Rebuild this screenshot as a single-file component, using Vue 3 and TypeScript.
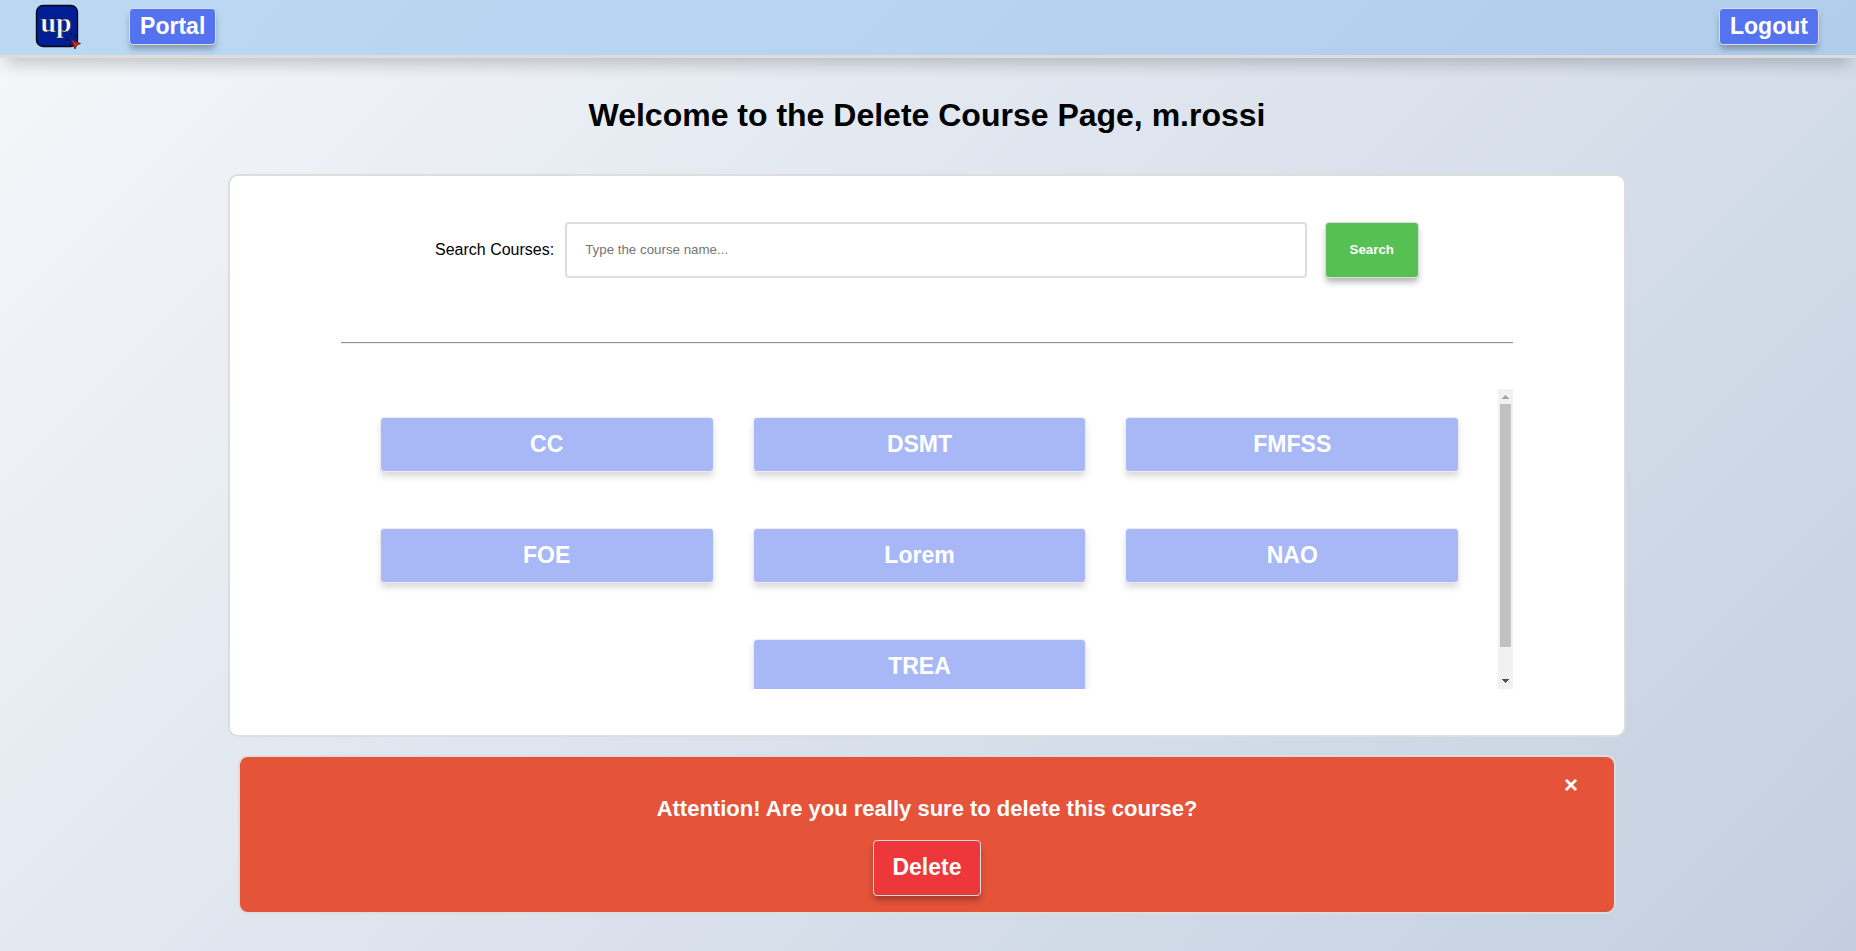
<script setup lang="ts">
import { computed, nextTick, onMounted, ref } from 'vue'

const username = ref('m.rossi')
const query = ref('')
const filter = ref('')
const showAlert = ref(true)
const courses = ref<string[]>(['CC', 'DSMT', 'FMFSS', 'FOE', 'Lorem', 'NAO', 'TREA'])

const list = ref<HTMLElement | null>(null)
const thumbSize = ref(90)
const thumbTop = ref(0)

const visibleCourses = computed(() =>
  courses.value.filter((name) => name.toLowerCase().includes(filter.value.toLowerCase())),
)

const thumbStyle = computed(() => ({ height: `${thumbSize.value}%`, top: `${thumbTop.value}%` }))

function updateThumb(): void {
  const el = list.value
  if (!el) return
  thumbSize.value = (el.clientHeight / el.scrollHeight) * 100
  thumbTop.value = (el.scrollTop / el.scrollHeight) * 100
}

function scrollList(amount: number): void {
  list.value?.scrollBy({ top: amount })
}

async function search(): Promise<void> {
  filter.value = query.value.trim()
  await nextTick()
  updateThumb()
}

onMounted(updateThumb)
</script>

<template>
  <div class="page">
    <header class="navbar">
      <svg class="logo" viewBox="0 0 46 46" role="img" aria-label="up">
        <rect x="1.5" y="1.5" width="41" height="41" rx="6.5" fill="#001f96" stroke="#06070f" stroke-width="1.4" />
        <text x="21" y="27.5" text-anchor="middle" class="logo-text">up</text>
        <g fill="#04082e">
          <circle cx="31" cy="33" r="1" />
          <circle cx="36" cy="30" r="1" />
          <circle cx="40" cy="32" r="1" />
          <circle cx="33" cy="36" r="1" />
          <circle cx="31" cy="40" r="1" />
          <circle cx="35" cy="41" r="1" />
        </g>
        <path d="M36 35.500 L45.500 39.500 L42 41 L40 45 Z" fill="#c52a12" stroke="#4d1712" stroke-width="0.8" />
      </svg>
      <button type="button" class="btn nav-btn">Portal</button>
      <button type="button" class="btn nav-btn logout">Logout</button>
    </header>

    <main>
      <h1>Welcome to the Delete Course Page, {{ username }}</h1>

      <section class="card">
        <form class="search" @submit.prevent="search">
          <label for="course-name">Search Courses:</label>
          <input id="course-name" v-model="query" type="text" placeholder="Type the course name..." />
          <button type="submit" class="btn search-btn">Search</button>
        </form>

        <hr />

        <div class="list-frame">
          <div ref="list" class="course-list" @scroll="updateThumb">
            <button v-for="name in visibleCourses" :key="name" type="button" class="btn course" disabled>
              {{ name }}
            </button>
          </div>
          <div class="scrollbar">
            <button type="button" class="arrow" aria-label="Scroll up" @click="scrollList(-40)">
              <svg viewBox="0 0 15 15"><path d="M4 10h7v-1h-1v-1h-1v-1h-1v-1h-1v1h-1v1h-1v1h-1z" fill="#a3a3a3" /></svg>
            </button>
            <div class="track"><div class="thumb" :style="thumbStyle"></div></div>
            <button type="button" class="arrow" aria-label="Scroll down" @click="scrollList(40)">
              <svg viewBox="0 0 15 15"><path d="M4 5h7v1h-1v1h-1v1h-1v1h-1v-1h-1v-1h-1v-1h-1z" fill="#505050" /></svg>
            </button>
          </div>
        </div>
      </section>

      <section v-if="showAlert" class="alert" role="alert">
        <button type="button" class="close" aria-label="Close" @click="showAlert = false">×</button>
        <p>Attention! Are you really sure to delete this course?</p>
        <button type="button" class="btn delete-btn">Delete</button>
      </section>
    </main>
  </div>
</template>

<style>
body {
  margin: 0;
}
</style>

<style scoped>
.page {
  box-sizing: border-box;
  min-height: 100vh;
  padding-bottom: 36px;
  background: linear-gradient(135deg, #f5f7fa, #c3cfe0);
  color: #000;
  font-family: "Liberation Sans", Arial, Helvetica, sans-serif;
  font-size: 16px;
}

.navbar {
  display: flex;
  align-items: flex-start;
  padding: 4px 2% 5px;
  border-bottom: 3px solid #ddd;
  background: linear-gradient(135deg, #bcd9f3, #b0ceec);
  box-shadow: 0 12px 16px -6px rgba(0, 0, 0, 0.2);
}

.logo {
  width: 46px;
  height: 46px;
  margin: 0 48px 0 -2px;
}

.logo-text {
  font-family: "Liberation Serif", "Times New Roman", serif;
  font-size: 28px;
  font-weight: bold;
  fill: #fff;
  stroke: #222;
  stroke-width: 0.6px;
}

.btn {
  box-sizing: border-box;
  border: 1px solid #ddd;
  border-radius: 4px;
  background: #5473f0;
  box-shadow: 0 5px 6px -1px rgba(0, 0, 0, 0.3);
  color: #fff;
  font-family: inherit;
  font-weight: bold;
  text-align: center;
}

.nav-btn,
.course,
.delete-btn {
  font-size: 23px;
  line-height: 26px;
}

.nav-btn {
  margin-top: 4px;
  padding: 4px 10px 5px;
}

.logout {
  margin-left: auto;
}

main {
  padding-right: 2px;
}

h1 {
  margin: 39px 0 40px;
  font-size: 32px;
  line-height: 37px;
  text-align: center;
}

.card {
  box-sizing: border-box;
  width: 75.4%;
  margin: 0 auto;
  padding: 46px 6%;
  border: 2px solid #ddd;
  border-radius: 10px;
  background: #fff;
}

.search {
  display: flex;
  align-items: center;
  padding: 0 8%;
}

.search input {
  box-sizing: border-box;
  flex: 1;
  min-width: 0;
  height: 56px;
  margin: 0 18px 0 11px;
  padding: 0 18px 2px;
  border: 2px solid #ddd;
  border-radius: 4px;
  background: #fff;
  font-family: inherit;
}

.search input::placeholder {
  color: #757575;
}

.search-btn {
  height: 56px;
  padding: 0 24px 2px;
  background: #57c052;
}

hr {
  margin: 64px 0 45px;
  border: solid;
  border-width: 1px 0;
  border-color: #909090 #eee #eee #909090;
}

.list-frame {
  display: flex;
  height: 300px;
}

.course-list {
  box-sizing: border-box;
  display: flex;
  flex: 1;
  flex-wrap: wrap;
  align-content: flex-start;
  justify-content: center;
  gap: 56px 39px;
  padding: 28px 38px;
  overflow-y: scroll;
  scrollbar-width: none;
}

.course {
  width: calc((100% - 79px) / 3);
  height: 55px;
  padding: 0 0 2px;
  opacity: 0.5;
}

.scrollbar {
  display: flex;
  flex-direction: column;
  width: 15px;
  background: #f1f1f1;
}

.arrow {
  height: 15px;
  padding: 0;
  border: 0;
  background: none;
}

.arrow svg {
  display: block;
  width: 15px;
  height: 15px;
  shape-rendering: crispEdges;
}

.track {
  flex: 1;
  margin: 0 2px;
}

.thumb {
  position: relative;
  background: #c1c1c1;
}

.alert {
  box-sizing: border-box;
  display: flex;
  flex-direction: column;
  align-items: center;
  width: calc(75.4% - 20px);
  margin: 18px auto 0;
  padding: 16px 36px;
  border: 2px solid #ddd;
  border-radius: 10px;
  background: #e55339;
  color: #fff;
}

.alert p {
  margin: 0 0 19px;
  font-size: 22px;
  font-weight: bold;
  line-height: 24px;
}

.close {
  align-self: flex-end;
  padding: 0;
  border: 0;
  background: none;
  color: #fff;
  font-family: inherit;
  font-size: 24px;
  font-weight: bold;
  line-height: 24px;
}

.delete-btn {
  height: 56px;
  padding: 0 18px 2px;
  background: #ee373b;
}
</style>
